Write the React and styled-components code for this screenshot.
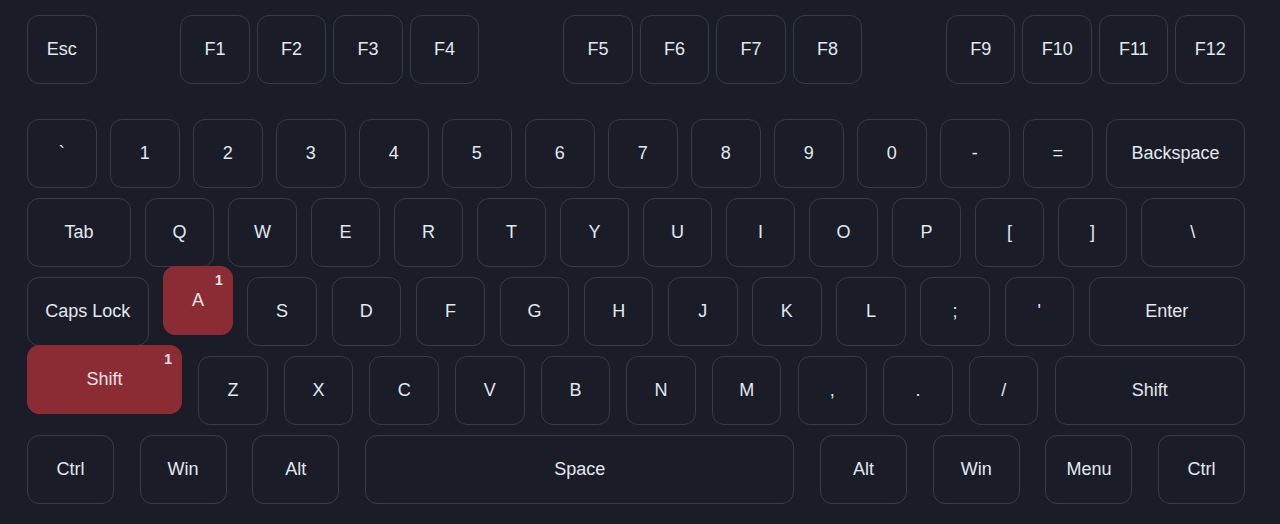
import React from 'react';
import styled, { createGlobalStyle } from 'styled-components';

const U = 69.5;

const Global = createGlobalStyle`
    html, body {
        margin: 0;
        padding: 0;
        background: #1a1d27;
    }
    body {
        font-family: "Liberation Sans", Arial, sans-serif;
    }
`

const Board = styled.div`
    width: 1280px;
    height: 524px;
    box-sizing: border-box;
    padding: 15px 35px 0 27px;
    background: #1a1d27;
    display: flex;
    flex-direction: column;
    gap: 10px;
`

const Row = styled.div`
    display: flex;
    justify-content: space-between;
    height: 69px;
    margin-bottom: ${p => p.$after || 0}px;
`

const Group = styled.div`
    display: flex;
    gap: 7px;
`

const Key = styled.div`
    position: relative;
    box-sizing: border-box;
    width: ${p => p.$w * U}px;
    flex: none;
    height: 69px;
    display: flex;
    align-items: center;
    justify-content: center;
    border: 1px solid ${p => p.$down ? '#8b2c35' : '#363b47'};
    border-radius: 12px;
    background: ${p => p.$down ? '#8b2c35' : 'transparent'};
    color: ${p => p.$down ? '#f1e3e5' : '#e2e8f0'};
    font-size: 18px;
    transform: ${p => p.$down ? 'translateY(-11px)' : 'none'};
`

const Badge = styled.span`
    position: absolute;
    top: 5px;
    right: 9px;
    font-size: 14px;
    font-weight: bold;
    color: #f3e6e8;
`

const fnGroups = [
    ['F1', 'F2', 'F3', 'F4'],
    ['F5', 'F6', 'F7', 'F8'],
    ['F9', 'F10', 'F11', 'F12'],
];

const rows = [
    [['`'], ['1'], ['2'], ['3'], ['4'], ['5'], ['6'], ['7'], ['8'], ['9'], ['0'], ['-'], ['='], ['Backspace', 2]],
    [['Tab', 1.5], ['Q'], ['W'], ['E'], ['R'], ['T'], ['Y'], ['U'], ['I'], ['O'], ['P'], ['['], [']'], ['\\', 1.5]],
    [['Caps Lock', 1.75], ['A', 1, 1], ['S'], ['D'], ['F'], ['G'], ['H'], ['J'], ['K'], ['L'], [';'], ["'"], ['Enter', 2.25]],
    [['Shift', 2.23, 1], ['Z'], ['X'], ['C'], ['V'], ['B'], ['N'], ['M'], [','], ['.'], ['/'], ['Shift', 2.74]],
    [['Ctrl', 1.25], ['Win', 1.25], ['Alt', 1.25], ['Space', 6.18], ['Alt', 1.25], ['Win', 1.25], ['Menu', 1.25], ['Ctrl', 1.25]],
];

function KeyCap({ label, w = 1, count }) {
    return <Key $w={w} $down={!!count}>
        {label}
        {count ? <Badge>{count}</Badge> : null}
    </Key>;
}

export default function App() {
    return <>
        <Global />
        <Board>
            <Row $after={25}>
                <KeyCap label="Esc" />
                {fnGroups.map((g, i) => <Group key={i}>
                    {g.map(k => <KeyCap key={k} label={k} />)}
                </Group>)}
            </Row>
            {rows.map((r, i) => <Row key={i}>
                {r.map(([label, w, count], j) => <KeyCap key={j} label={label} w={w} count={count} />)}
            </Row>)}
        </Board>
    </>;
}
